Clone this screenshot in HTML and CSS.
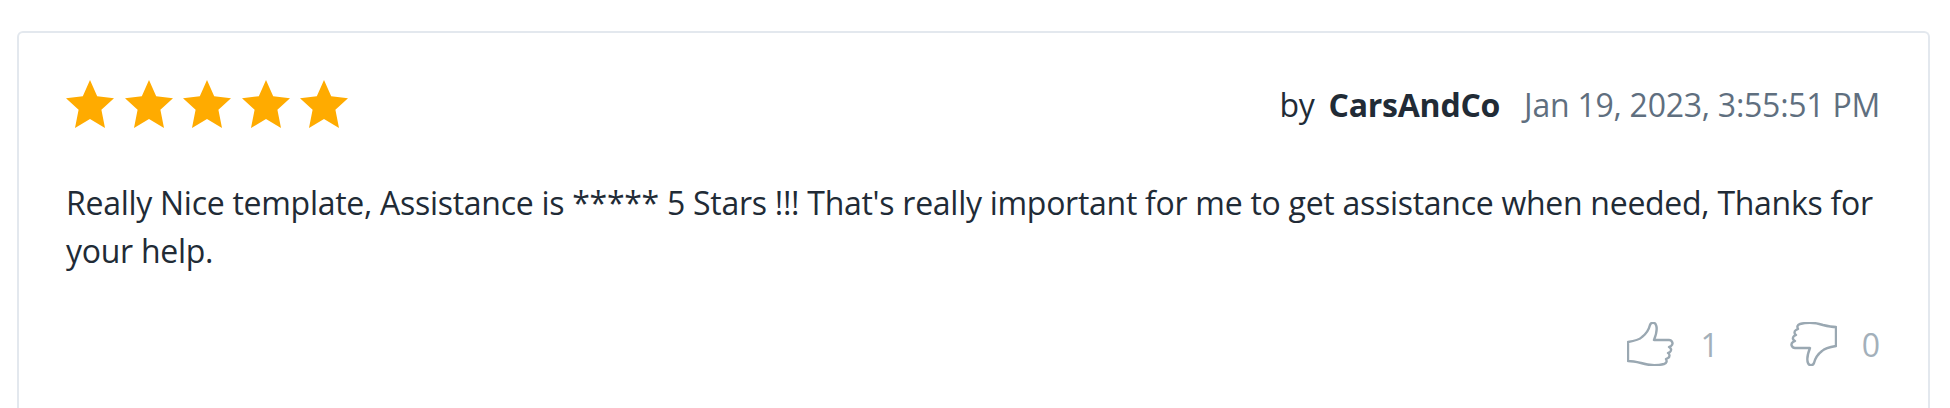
FILE: index.html
```html
<!DOCTYPE html>
<html lang="en">
  <head>
    <meta charset="UTF-8" />
    <title>Review</title>
    <link rel="stylesheet" href="styles.css">
  </head>
  <body>
    <div class="review-card">
      <div class="review-head">
        <div class="stars">
          <svg viewBox="0 0 48 48"><path d="M24 0l7.200 16.200 16.800 2-12.600 11.600 3.600 18.200L24 39l-15 9 3.600-18.200L0 18.200l16.800-2z"/></svg>
          <svg viewBox="0 0 48 48"><path d="M24 0l7.200 16.200 16.800 2-12.600 11.600 3.600 18.200L24 39l-15 9 3.600-18.200L0 18.200l16.800-2z"/></svg>
          <svg viewBox="0 0 48 48"><path d="M24 0l7.200 16.200 16.800 2-12.600 11.600 3.600 18.200L24 39l-15 9 3.600-18.200L0 18.200l16.800-2z"/></svg>
          <svg viewBox="0 0 48 48"><path d="M24 0l7.200 16.200 16.800 2-12.600 11.600 3.600 18.200L24 39l-15 9 3.600-18.200L0 18.200l16.800-2z"/></svg>
          <svg viewBox="0 0 48 48"><path d="M24 0l7.200 16.200 16.800 2-12.600 11.600 3.600 18.200L24 39l-15 9 3.600-18.200L0 18.200l16.800-2z"/></svg>
        </div>
        <div class="meta">
          <span class="by">by <strong>CarsAndCo</strong></span>
          <span class="date">Jan 19, 2023, 3:55:51 PM</span>
        </div>
      </div>
      <p class="review-text">Really Nice template, Assistance is ***** 5 Stars !!! That's really important for me to get assistance when needed, Thanks for your help.</p>
      <div class="votes">
        <div class="vote">
          <svg class="thumb" viewBox="0 0 48 44"><path d="M1 20c6-1 11-2 14-5 4-3 7-8 8-12 1-3 5-3 6 0 2 5 0 10-2 15h15c3 0 5 4 2 6l-2 1c2 1 3 3 1 5l-2 1c2 1 2 4 0 5l-2 1c1 2 1 4-2 5-8 2-17 1-23-1-4-1-8-2-13-2z"/></svg>
          <span>1</span>
        </div>
        <div class="vote">
          <svg class="thumb" viewBox="0 0 48 44"><path transform="rotate(180 24 22)" d="M1 20c6-1 11-2 14-5 4-3 7-8 8-12 1-3 5-3 6 0 2 5 0 10-2 15h15c3 0 5 4 2 6l-2 1c2 1 3 3 1 5l-2 1c2 1 2 4 0 5l-2 1c1 2 1 4-2 5-8 2-17 1-23-1-4-1-8-2-13-2z"/></svg>
          <span>0</span>
        </div>
      </div>
    </div>
  </body>
</html>
```
FILE: styles.css
```css
body {
  font-family: "Open Sans", "Noto Sans", sans-serif;
  margin: 0;
  padding: 31px 20px 0 17px;
  background: #fff;
  color: #212b36;
  height: 377px;
  overflow: hidden;
}

.review-card {
  border: 2px solid #e3e8ee;
  border-bottom: none;
  border-radius: 6px 6px 0 0;
  padding: 47px 22px 0 47px;
  height: 377px;
  box-sizing: border-box;
}

.review-head {
  display: flex;
  justify-content: space-between;
  align-items: center;
  padding-right: 26px;
}

.stars {
  display: flex;
  gap: 10.500px;
}

.stars svg {
  width: 48px;
  height: 48px;
  fill: #ffab00;
}

.meta {
  font-size: 32px;
  letter-spacing: -0.250px;
  display: flex;
  gap: 24px;
}

.by strong {
  margin-left: 6px;
}

.date {
  color: #5f6f7f;
}

.review-text {
  font-size: 32px;
  letter-spacing: -0.280px;
  line-height: 48px;
  margin: 51px 26px 0 0;
}

.votes {
  display: flex;
  justify-content: flex-end;
  gap: 70px;
  margin-top: 47px;
  padding-right: 26px;
  color: #a3b0ba;
  font-size: 32px;
}

.vote {
  display: flex;
  align-items: center;
  gap: 25px;
}

.thumb {
  width: 48px;
  height: 44px;
  fill: none;
  stroke: #9aa8b2;
  stroke-width: 2.400;
  stroke-linejoin: round;
  stroke-linecap: round;
}
```
